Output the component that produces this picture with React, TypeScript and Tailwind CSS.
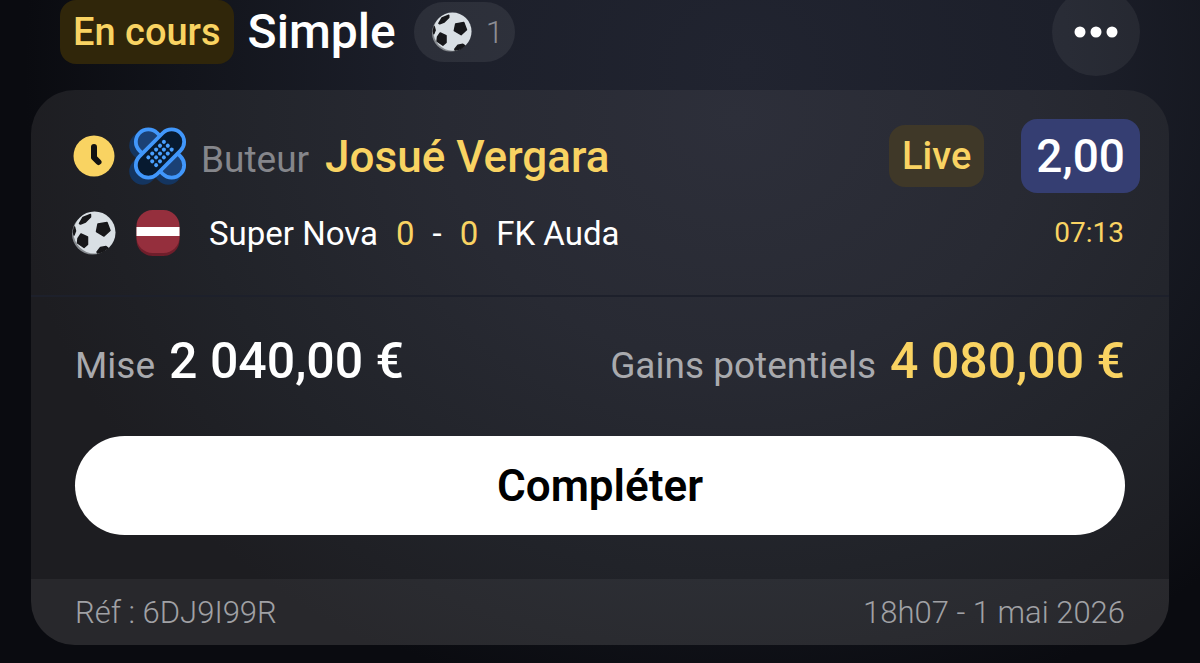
import React from "react";

function SoccerBall({ className }: { className: string }) {
  return (
    <svg viewBox="0 0 44 44" className={className} aria-hidden="true">
      <circle cx="20.500" cy="23" r="20.500" fill="#85898e" />
      <circle cx="22.500" cy="21.500" r="21" fill="#d9dfe4" />
      <g fill="#17171a" stroke="#17171a" strokeWidth="1.500" strokeLinejoin="round">
        <path d="M26 13 35 11.500 38 19.500 32 25 24.500 20.500Z" />
        <path d="M7.500 12.500 11 6.500 18.500 3.500 18.500 6 13.500 11 8.500 13Z" />
        <path d="M6 27.500 9 23 15.500 26 15.500 33.500 12 36.500 5.500 32Z" />
        <path d="M25 41 28.500 36.500 34 35.500 36 37 31 40.500 25.500 42Z" />
        <path d="M1.500 21 2.500 16 3.500 20 2 24Z" />
      </g>
    </svg>
  );
}

function ClockIcon() {
  return (
    <svg viewBox="0 0 42 42" className="size-[42px] shrink-0" aria-hidden="true">
      <circle cx="21" cy="21" r="20.500" fill="#f9d362" />
      <path d="M21 12V22.500L25.500 27" fill="none" stroke="#121212" strokeWidth="6" strokeLinecap="round" strokeLinejoin="round" />
    </svg>
  );
}

const DOTS = [0, 1, 2, 3, 4].flatMap((col) => [0, 1, 2].map((row) => ({ x: -11 + col * 5.5, y: -5.5 + row * 5.5 })));

function BandageIcon() {
  return (
    <svg viewBox="0 0 58 58" className="size-[58px] shrink-0" aria-hidden="true">
      <g fill="#143560">
        <rect x="-5" y="18" width="63" height="27" rx="13.500" transform="rotate(45 26.500 31.500)" />
        <rect x="-5" y="18" width="63" height="27" rx="13.500" transform="rotate(-45 26.500 31.500)" />
      </g>
      <g stroke="#4197fb" strokeWidth="3.800">
        <rect x="2" y="14" width="58" height="25" rx="12.500" fill="#1b4175" transform="rotate(45 31 26.500)" />
        <rect x="2" y="14" width="58" height="25" rx="12.500" fill="#071a30" transform="rotate(-45 31 26.500)" />
      </g>
      <g transform="translate(31 26.500) rotate(-45)" fill="#4aa0ff">
        {DOTS.map((dot) => (
          <circle key={`${dot.x}:${dot.y}`} cx={dot.x} cy={dot.y} r="2" />
        ))}
      </g>
    </svg>
  );
}

function LatviaFlag() {
  return (
    <svg viewBox="0 0 44 46" className="h-[46px] w-11 shrink-0" role="img" aria-label="Lettonie">
      <rect x="0.500" y="4" width="43" height="42" rx="16" fill="#6f1e2b" />
      <rect x="0.500" y="0" width="43" height="43" rx="16" fill="#952f3d" />
      <rect x="0.500" y="17" width="43" height="9" fill="#ffffff" />
    </svg>
  );
}

export default function App() {
  return (
    <main className="min-h-screen overflow-hidden bg-[#07080b] bg-[radial-gradient(ellipse_60%_100%_at_62%_10%,#212430_0%,#1c1f2a_45%,#12141b_78%,#0a0b10_100%)] px-[31px] pb-[18px] font-['Roboto','Liberation_Sans',sans-serif] text-white">
      <header className="-mt-3 flex h-[88px] items-center px-[29px]">
        <span className="flex h-16 items-center rounded-2xl bg-[#30260a] px-[13px] text-[38px] leading-none font-medium text-[#f9d362]">
          En cours
        </span>
        <h1 className="ml-[14px] text-[48px] leading-none font-medium">Simple</h1>
        <span className="ml-[18px] flex h-[60px] items-center gap-[14px] rounded-full bg-white/7 pr-3 pl-[18px] text-[32px] leading-none font-light text-[#8c8d94]">
          <SoccerBall className="size-10" />
          1
        </span>
        <button type="button" aria-label="Plus d’options" className="ml-auto flex size-[88px] items-center justify-center rounded-full bg-white/6">
          <svg viewBox="0 0 44 12" className="h-3 w-11" fill="#ffffff" aria-hidden="true">
            <circle cx="6" cy="6" r="5.500" />
            <circle cx="22" cy="6" r="5.500" />
            <circle cx="38" cy="6" r="5.500" />
          </svg>
        </button>
      </header>

      <article className="mt-[14px] overflow-hidden rounded-[44px] bg-[radial-gradient(ellipse_64%_110%_at_62%_5%,#2d2f3a_0%,#282a33_40%,#212329_75%,#1d1d21_100%)]">
        <section className="border-b-2 border-[#1d202b] pt-[29px] pr-[29px] pb-[38px] pl-[42px]">
          <div className="flex h-[74px] items-center">
            <ClockIcon />
            <span className="ml-[14px] flex">
              <BandageIcon />
            </span>
            <p className="ml-[14px] flex items-baseline gap-4 pt-1 leading-[50px]">
              <span className="text-[37px] text-[#85868b]">Buteur</span>
              <span className="text-[44px] font-medium text-[#f9d362]">Josué Vergara</span>
            </p>
            <span className="ml-auto flex h-[62px] items-center rounded-2xl bg-[#3f3828] px-[13px] text-[38px] leading-none font-medium text-[#f9d362]">
              Live
            </span>
            <span className="ml-[37px] flex h-[74px] items-center rounded-2xl bg-[#353e72] px-[15px] text-[46px] leading-none font-medium">
              2,00
            </span>
          </div>
          <div className="mt-4 flex h-12 items-center pr-4 text-[33px] leading-none">
            <SoccerBall className="-ml-px size-11" />
            <span className="ml-5 flex">
              <LatviaFlag />
            </span>
            <span className="ml-[29px]">Super Nova</span>
            <span className="ml-[18px] text-[#f9d362]">0</span>
            <span className="ml-[18px]">-</span>
            <span className="ml-[18px] text-[#f9d362]">0</span>
            <span className="ml-[18px]">FK Auda</span>
            <time className="ml-auto text-[28px] text-[#f9d362]">07:13</time>
          </div>
        </section>

        <section className="px-11 pt-[38px] pb-11">
          <div className="flex h-[53px] items-baseline justify-between text-[37px] leading-[52px] text-[#a9aaae]">
            <p className="flex items-baseline gap-[14px]">
              Mise
              <strong className="text-[50px] font-medium text-white">2 040,00 €</strong>
            </p>
            <p className="flex items-baseline gap-[14px]">
              Gains potentiels
              <strong className="text-[50px] font-medium text-[#f9d362]">4 080,00 €</strong>
            </p>
          </div>
          <button type="button" className="mt-12 flex h-[99px] w-full items-center justify-center rounded-full bg-white text-[44px] leading-none font-semibold text-black">
            Compléter
          </button>
        </section>

        <footer className="flex h-[66px] items-center justify-between bg-white/5 px-11 text-[31px] leading-none font-light text-[#a0a1a5]">
          <span>Réf : 6DJ9I99R</span>
          <time dateTime="2026-05-01T18:07">18h07 - 1 mai 2026</time>
        </footer>
      </article>
    </main>
  );
}
